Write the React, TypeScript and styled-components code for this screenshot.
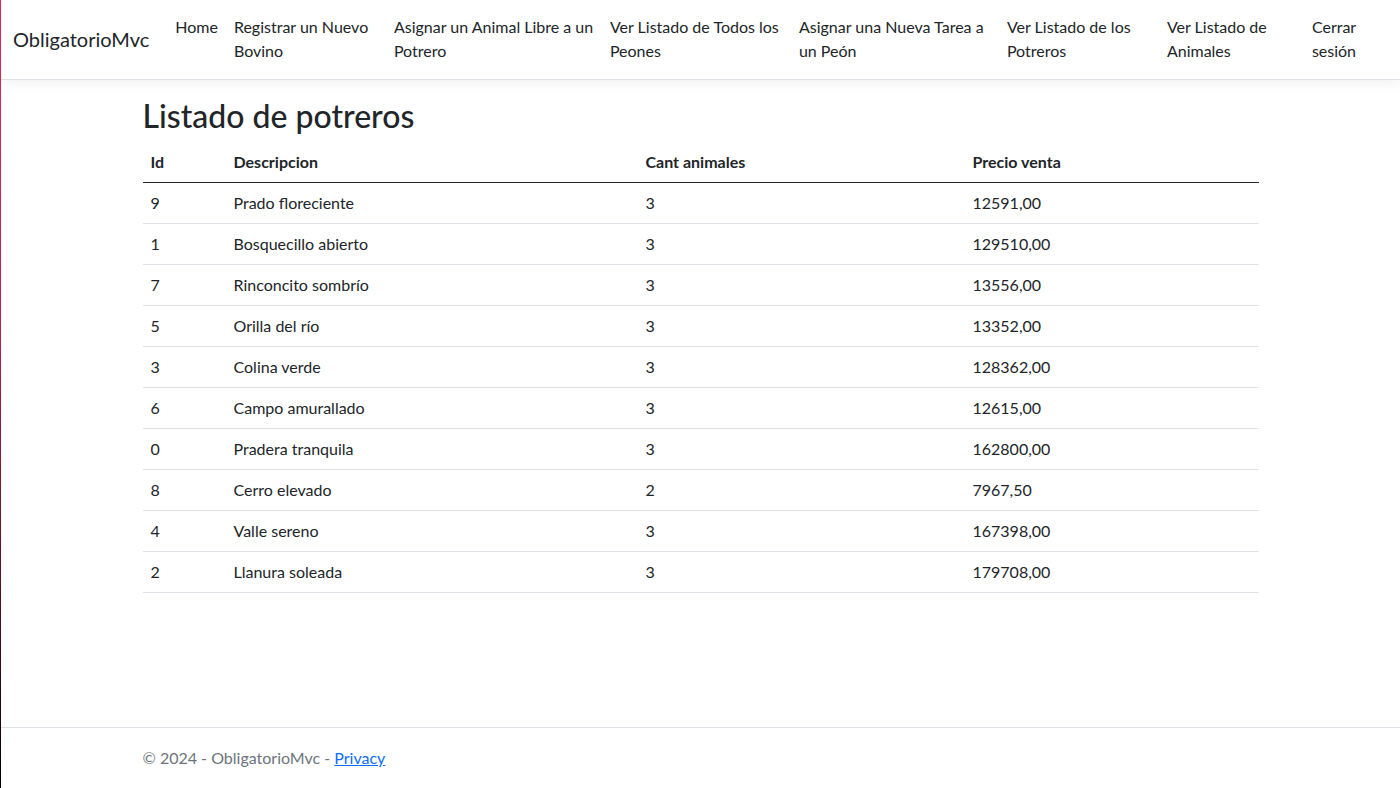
import React from 'react';
import styled, { createGlobalStyle } from 'styled-components';

const GlobalStyle = createGlobalStyle`
  html, body {
    margin: 0;
    padding: 0;
    background: #fff;
  }
  body {
    font-family: 'Lato', 'Liberation Sans', sans-serif;
    font-size: 16px;
    line-height: 1.5;
    color: #212529;
  }
`;

const Page = styled.div`
  min-height: 100vh;
  display: flex;
  flex-direction: column;
  border-left: 1px solid transparent;
  border-image: linear-gradient(#f2235a, #c81e4f 40%, #5a1020 75%, #000) 1;
  box-sizing: border-box;
`;

const Navbar = styled.nav`
  background: #fff;
  border-bottom: 1px solid #dee2e6;
  box-shadow: 0 4px 12px rgba(0, 0, 0, 0.05);
  padding: 7px 0 8px;
  margin-bottom: 16px;
`;

const NavInner = styled.div`
  display: flex;
  align-items: center;
  padding: 0 12px;
`;

const Brand = styled.a`
  font-size: 20px;
  line-height: 30px;
  padding: 5px 0;
  margin-right: 18px;
  color: #212529;
  text-decoration: none;
  white-space: nowrap;
`;

const NavList = styled.ul`
  display: flex;
  list-style: none;
  margin: 0;
  padding: 0;
  flex: 1;
`;

const NavItem = styled.li<{ $w: number }>`
  flex: 0 0 ${(p) => p.$w}px;
  box-sizing: border-box;
`;

const NavLink = styled.a`
  display: block;
  padding: 8px;
  color: #212529;
  text-decoration: none;
`;

const Container = styled.main`
  width: 1140px;
  box-sizing: border-box;
  margin: 0 auto;
  padding: 0 12px;
`;

const Title = styled.h2`
  font-size: 32px;
  font-weight: 500;
  line-height: 1.2;
  margin: 1px 0 7px;
`;

const Table = styled.table`
  width: 100%;
  table-layout: fixed;
  border-collapse: collapse;
  margin-bottom: 16px;
`;

const Th = styled.th<{ $w?: number }>`
  box-sizing: border-box;
  text-align: left;
  font-weight: 700;
  padding: 8px;
  border-bottom: 1px solid #212529;
  width: ${(p) => (p.$w ? `${p.$w}px` : 'auto')};
`;

const Td = styled.td`
  padding: 8px;
  border-bottom: 1px solid #dee2e6;
`;

const Footer = styled.footer`
  margin-top: auto;
  border-top: 1px solid #dee2e6;
  line-height: 60px;
  color: #6c757d;
  white-space: nowrap;
`;

const FooterInner = styled.div`
  width: 1140px;
  box-sizing: border-box;
  margin: 0 auto;
  padding: 0 12px;
`;

const Link = styled.a`
  color: #0d6efd;
  text-decoration: underline;
`;

const links = [
  { label: 'Home', w: 58 },
  { label: 'Registrar un Nuevo Bovino', w: 160 },
  { label: 'Asignar un Animal Libre a un Potrero', w: 216 },
  { label: 'Ver Listado de Todos los Peones', w: 189 },
  { label: 'Asignar una Nueva Tarea a un Peón', w: 208 },
  { label: 'Ver Listado de los Potreros', w: 160 },
  { label: 'Ver Listado de Animales', w: 145 },
  { label: 'Cerrar sesión', w: 84 },
];

const potreros = [
  { id: 9, desc: 'Prado floreciente', cant: 3, precio: '12591,00' },
  { id: 1, desc: 'Bosquecillo abierto', cant: 3, precio: '129510,00' },
  { id: 7, desc: 'Rinconcito sombrío', cant: 3, precio: '13556,00' },
  { id: 5, desc: 'Orilla del río', cant: 3, precio: '13352,00' },
  { id: 3, desc: 'Colina verde', cant: 3, precio: '128362,00' },
  { id: 6, desc: 'Campo amurallado', cant: 3, precio: '12615,00' },
  { id: 0, desc: 'Pradera tranquila', cant: 3, precio: '162800,00' },
  { id: 8, desc: 'Cerro elevado', cant: 2, precio: '7967,50' },
  { id: 4, desc: 'Valle sereno', cant: 3, precio: '167398,00' },
  { id: 2, desc: 'Llanura soleada', cant: 3, precio: '179708,00' },
];

export default function App() {
  return (
    <>
      <GlobalStyle />
      <Page>
        <Navbar>
          <NavInner>
            <Brand href="#">ObligatorioMvc</Brand>
            <NavList>
              {links.map((l) => (
                <NavItem key={l.label} $w={l.w}>
                  <NavLink href="#">{l.label}</NavLink>
                </NavItem>
              ))}
            </NavList>
          </NavInner>
        </Navbar>
        <Container>
          <Title>Listado de potreros</Title>
          <Table>
            <thead>
              <tr>
                <Th $w={83}>Id</Th>
                <Th $w={412}>Descripcion</Th>
                <Th $w={327}>Cant animales</Th>
                <Th>Precio venta</Th>
              </tr>
            </thead>
            <tbody>
              {potreros.map((p) => (
                <tr key={p.id}>
                  <Td>{p.id}</Td>
                  <Td>{p.desc}</Td>
                  <Td>{p.cant}</Td>
                  <Td>{p.precio}</Td>
                </tr>
              ))}
            </tbody>
          </Table>
        </Container>
        <Footer>
          <FooterInner>
            © 2024 - ObligatorioMvc - <Link href="#">Privacy</Link>
          </FooterInner>
        </Footer>
      </Page>
    </>
  );
}
